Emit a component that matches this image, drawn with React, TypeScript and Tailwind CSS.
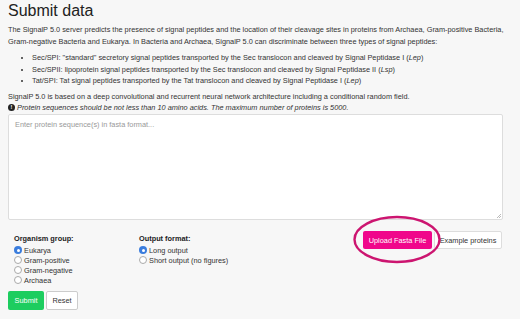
import React from "react";

function Radio({ checked, label }: { checked?: boolean; label: string }) {
  return (
    <label className="flex items-center h-[10px] gap-[1px]">
      {checked ? (
        <span className="w-[8px] h-[8px] rounded-full bg-[#3b7ddd] flex items-center justify-center">
          <span className="w-[3px] h-[3px] rounded-full bg-white" />
        </span>
      ) : (
        <span className="w-[8px] h-[8px] rounded-full border border-[#aaa] bg-white" />
      )}
      <span className="ml-[1px]">{label}</span>
    </label>
  );
}

export default function App() {
  return (
    <div
      className="w-[520px] h-[319px] bg-[#f7f7f7] text-[#333] overflow-hidden px-[8px]"
      style={{ fontFamily: '"Liberation Sans", Arial, sans-serif' }}
    >
      <h1 className="text-[16px] leading-[20px] pt-[1px] text-[#222]">Submit data</h1>
      <p className="text-[7.35px] leading-[12px] mt-[3px]">
        The SignalP 5.0 server predicts the presence of signal peptides and the location of their cleavage sites in proteins from Archaea, Gram-positive Bacteria, Gram-negative Bacteria and Eukarya. In Bacteria and Archaea, SignalP 5.0 can discriminate between three types of signal peptides:
      </p>
      <ul className="text-[7.35px] leading-[11.7px] mt-[4px] pl-[24px] list-disc">
        <li>Sec/SPI: "standard" secretory signal peptides transported by the Sec translocon and cleaved by Signal Peptidase I (<i>Lep</i>)</li>
        <li>Sec/SPII: lipoprotein signal peptides transported by the Sec translocon and cleaved by Signal Peptidase II (<i>Lsp</i>)</li>
        <li>Tat/SPI: Tat signal peptides transported by the Tat translocon and cleaved by Signal Peptidase I (<i>Lep</i>)</li>
      </ul>
      <p className="text-[7.35px] leading-[11px] mt-[4px]">
        SignalP 5.0 is based on a deep convolutional and recurrent neural network architecture including a conditional random field.
      </p>
      <p className="text-[7.35px] leading-[11px] flex items-center gap-[2px]">
        <span className="w-[7px] h-[7px] rounded-full bg-[#222] text-white text-[5.5px] leading-none font-bold flex items-center justify-center not-italic">!</span>
        <i>Protein sequences should be not less than 10 amino acids. The maximum number of proteins is 5000.</i>
      </p>
      <div className="mt-[1px] w-[495px] h-[106px] bg-white border border-[#ddd] rounded-[2px] relative">
        <div className="text-[7.35px] text-[#999] pl-[6px] pt-[4px]">Enter protein sequence(s) in fasta format...</div>
        <svg className="absolute right-[1px] bottom-[1px]" width="5" height="5" viewBox="0 0 5 5">
          <path d="M1 5 L5 1 M3 5 L5 3" stroke="#aaa" strokeWidth="0.8" />
        </svg>
      </div>
      <div className="flex justify-between mt-[11px] w-[494px]">
        <div className="flex text-[7.35px] pl-[6px] pt-[1px]">
          <div className="w-[125px]">
            <div className="font-bold leading-[13px] text-[#222]">Organism group:</div>
            <Radio checked label="Eukarya" />
            <Radio label="Gram-positive" />
            <Radio label="Gram-negative" />
            <Radio label="Archaea" />
          </div>
          <div>
            <div className="font-bold leading-[13px] text-[#222]">Output format:</div>
            <Radio checked label="Long output" />
            <Radio label="Short output (no figures)" />
          </div>
        </div>
        <div className="flex gap-[2px] text-[7.35px] relative">
          <div className="relative">
            <button className="h-[18px] w-[69px] bg-[#f0078b] text-white rounded-[2px]">Upload Fasta File</button>
            <svg className="absolute left-[-10px] top-[-16px] pointer-events-none" width="88" height="49" viewBox="0 0 88 49">
              <ellipse cx="44" cy="24.5" rx="42.5" ry="22.5" fill="none" stroke="#cc1570" strokeWidth="2.4" />
            </svg>
          </div>
          <button className="h-[18px] w-[68px] bg-white border border-[#ddd] text-[#333] rounded-[2px]">Example proteins</button>
        </div>
      </div>
      <div className="flex gap-[2px] mt-[6px] text-[7.35px]">
        <button className="h-[19px] w-[36px] bg-[#1dcd5f] text-white rounded-[2px]">Submit</button>
        <button className="h-[19px] w-[32px] bg-white border border-[#ccc] text-[#333] rounded-[2px]">Reset</button>
      </div>
    </div>
  );
}
